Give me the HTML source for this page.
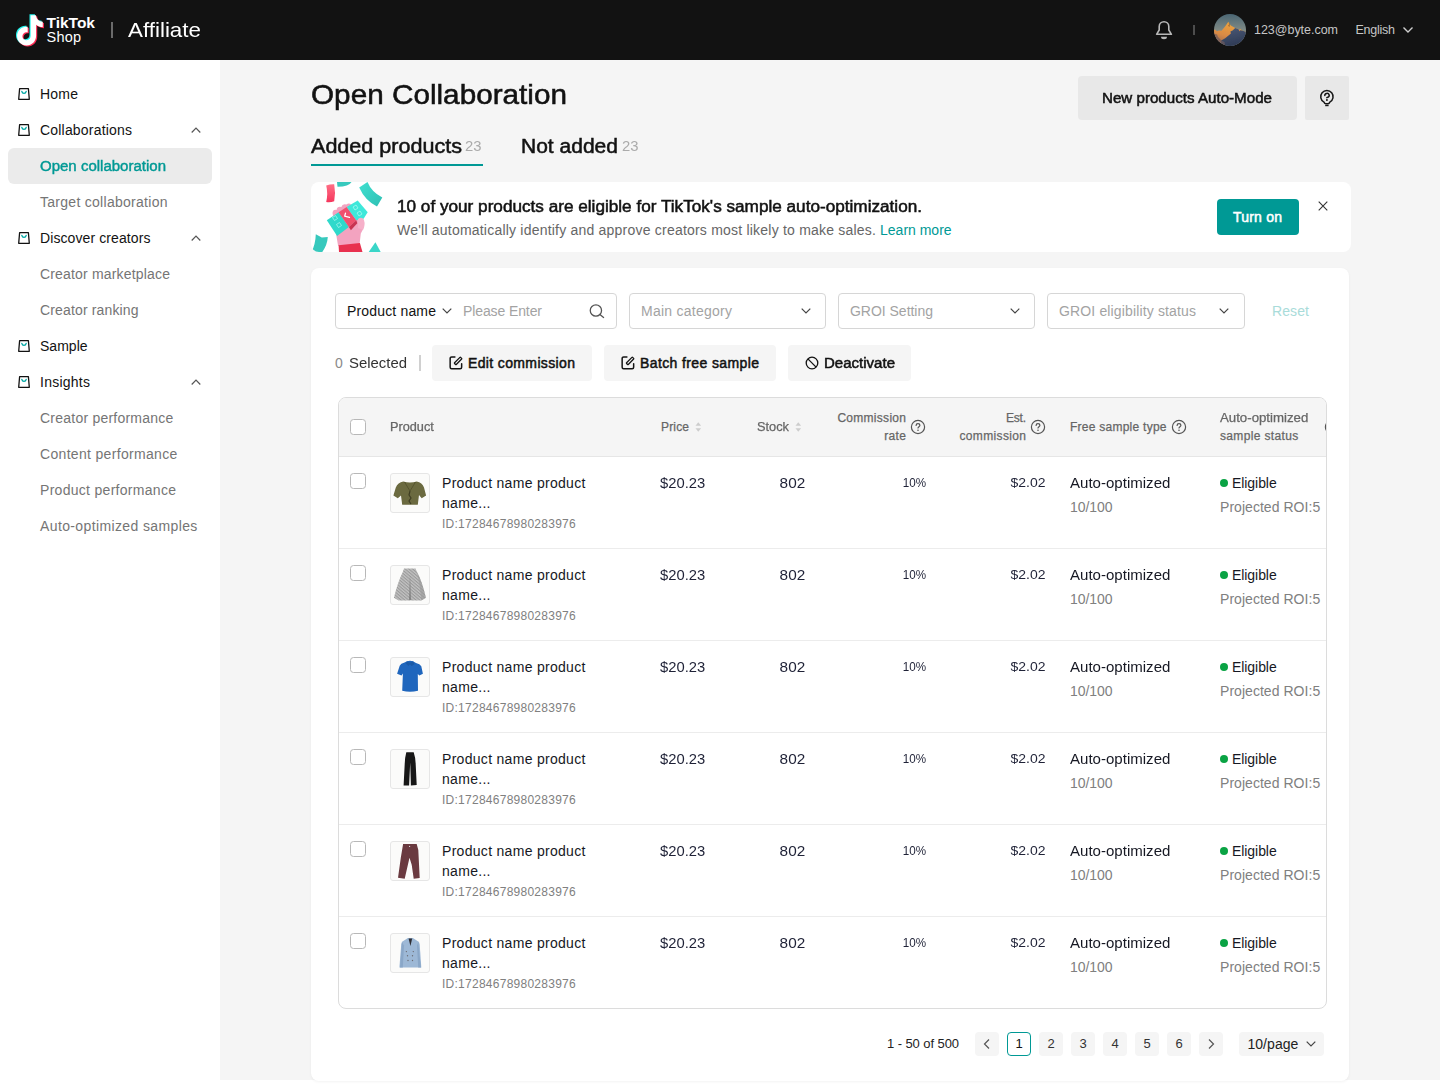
<!DOCTYPE html>
<html lang="en">
<head>
<meta charset="utf-8">
<title>Open Collaboration</title>
<style>
*{box-sizing:border-box;margin:0;padding:0}
html,body{width:1440px;height:1087px;overflow:hidden;background:#fff}
body{font-family:"Liberation Sans",sans-serif;color:#121212;font-size:14px;position:relative;-webkit-font-smoothing:antialiased}
.abs{position:absolute}
.t{position:absolute;white-space:nowrap;line-height:1}
/* header */
#hdr{position:absolute;left:0;top:0;width:1440px;height:60px;background:#121212}
/* sidebar */
#side{position:absolute;left:0;top:60px;width:220px;height:1027px;background:#fff}
#main{position:absolute;left:220px;top:60px;width:1220px;height:1020px;background:#f5f5f5}
.mi{position:absolute;left:0;width:220px;height:36px}
.mi .ic{position:absolute;left:18px;top:12px;width:12px;height:12px}
.mi .lb{position:absolute;left:40px;top:0;line-height:36px;font-size:14px;white-space:nowrap;color:#121212}
.mi.sub .lb{color:#757575}
.mi .ch{position:absolute;left:191px;top:15px;width:10px;height:6px}
.mi.sel::before{content:"";position:absolute;left:8px;top:0;width:204px;height:36px;border-radius:6px;background:#ebebeb}
.mi.sel .lb{color:#009995;-webkit-text-stroke:0.400px #009995}

.sb{font-weight:400;-webkit-text-stroke:0.500px currentColor}
#title{left:311px;top:80.600px;font-size:28px;font-weight:400;-webkit-text-stroke:0.550px #121212}
.btn{position:absolute;border-radius:4px;background:#e8e8e8}
.tab{font-size:20px;top:136px}
.cnt{font-size:14px;color:#ababab;top:139px}
#banner{position:absolute;left:311px;top:182px;width:1040px;height:70px;background:#fff;border-radius:8px;overflow:hidden}
#card{position:absolute;left:311px;top:268px;width:1038px;height:813px;background:#fff;border-radius:8px;box-shadow:0 1px 3px rgba(0,0,0,0.050)}
.fsel{position:absolute;top:293px;height:36px;border:1px solid #d6d6d6;border-radius:4px;background:#fff}
.ph{color:#a3a3a3;font-size:14px}
.abtn{position:absolute;top:345px;height:36px;border-radius:4px;background:#f5f5f5}

#tbl{position:absolute;left:338px;top:397px;width:989px;height:612px;border:1px solid #dcdcdc;border-radius:8px;overflow:hidden;background:#fff}
#th{position:absolute;left:0;top:0;width:100%;height:59px;background:#f5f5f5;border-bottom:1px solid #e6e6e6}
.h{position:absolute;white-space:nowrap;font-size:12px;line-height:18px;color:#666;-webkit-text-stroke:0.250px #666}
.cb{position:absolute;left:11px;width:16px;height:16px;border:1px solid #b8b8b8;border-radius:3.500px;background:#fff}
.row{position:absolute;left:0;width:100%;height:92px;border-bottom:1px solid #ececec}
.thumb{position:absolute;left:51px;top:16px;width:40px;height:40px;border:1px solid #e6e6e6;border-radius:3px;background:#fbfbfa;overflow:hidden}
.c{position:absolute;white-space:nowrap;font-size:14px;line-height:20px;color:#161823}
.g{color:#808080}
.hq{position:absolute;width:16px;height:16px}
.srt{position:absolute;width:7px;height:12px}
#pg .pb{position:absolute;top:1032px;width:24px;height:24px;border-radius:4px;background:#f5f5f5;font-size:13px;line-height:24.800px;text-align:center;color:#333;overflow:hidden}
#pg .pb svg{display:block}
.pr,.stk,.pct,.ec{color:#1f2237}
/*AUTOFIT*/
#tk1{letter-spacing:-0.006px}
#tk2{letter-spacing:0.208px}
#aff{transform:scaleX(1.0657);transform-origin:0 50%}
#eml{letter-spacing:-0.024px}
#eng{letter-spacing:-0.267px}
#title{transform:scaleX(1.0610);transform-origin:0 50%}
#npam{transform:scaleX(1.0814);transform-origin:0 50%}
#tab1{transform:scaleX(1.0777);transform-origin:0 50%}
#c1{transform:scaleX(1.0592);transform-origin:0 50%}
#tab2{transform:scaleX(1.0510);transform-origin:0 50%}
#c2{transform:scaleX(1.0592);transform-origin:0 50%}
#bt1{transform:scaleX(1.0725);transform-origin:0 50%}
#bt2s{letter-spacing:0.212px}
#lm{letter-spacing:-0.010px}
#ton{letter-spacing:0.211px}
#pn{letter-spacing:0.166px}
#pe{letter-spacing:-0.107px}
#mc{letter-spacing:0.255px}
#gs{letter-spacing:-0.024px}
#ge{letter-spacing:0.144px}
#rst{letter-spacing:0.105px}
#s1{transform:scaleX(1.0645);transform-origin:0 50%}
#b1{letter-spacing:0.363px}
#b2{letter-spacing:0.385px}
#b3{transform:scaleX(1.0732);transform-origin:0 50%}
#lb0{letter-spacing:0.214px}
#lb1{letter-spacing:0.192px}
#lb2{transform:scaleX(1.0721);transform-origin:0 50%}
#lb3{letter-spacing:0.280px}
#lb4{letter-spacing:0.099px}
#lb5{letter-spacing:0.176px}
#lb6{letter-spacing:0.143px}
#lb7{letter-spacing:0.026px}
#lb8{letter-spacing:0.250px}
#lb9{letter-spacing:0.229px}
#lb10{letter-spacing:0.320px}
#lb11{letter-spacing:0.293px}
#lb12{letter-spacing:0.376px}
#hp{transform:scaleX(1.0590);transform-origin:0 50%}
#hpr{letter-spacing:0.164px}
#hst{transform:scaleX(1.0661);transform-origin:0 50%}
.hcr1{letter-spacing:0.287px;margin-right:-0.287px}
.hcr2{letter-spacing:0.371px;margin-right:-0.371px}
.hec1{letter-spacing:-0.257px;margin-right:0.257px}
.hec2{letter-spacing:0.349px;margin-right:-0.349px}
#hfs{letter-spacing:0.252px}
.hao1{display:inline-block;transform:scaleX(1.1031);transform-origin:0 50%}
.hao2{letter-spacing:0.346px}
.pn1{letter-spacing:0.297px}
.pn2{letter-spacing:0.297px}
.pid{letter-spacing:0.258px}
.pr{transform:scaleX(1.0554);transform-origin:0 50%}
.stk{transform:scaleX(1.0577);transform-origin:100% 50%}
.pct{transform:scaleX(0.8951);transform-origin:100% 50%}
.ec{transform:scaleX(1.0754);transform-origin:100% 50%}
.ao{transform:scaleX(1.0751);transform-origin:0 50%}
.rt{letter-spacing:-0.066px}
.el{letter-spacing:-0.063px}
.roi{letter-spacing:0.042px}
#pgt{letter-spacing:-0.083px}
#ppg{letter-spacing:0.065px}
/*END*/
</style>
</head>
<body>
<div id="hdr">
<svg class="abs" style="left:15.500px;top:12px" width="33" height="37" viewBox="0 0 32 36">
<path d="M14.2 3.2h5.2c.3 3.6 2.6 6 6.6 6.4v5.1c-2.500-.1-4.700-.9-6.500-2.300v10.800c0 5.400-4.100 9.400-9.300 9.400-5.200 0-9.200-4-9.200-9.200 0-5.500 4.600-9.700 10.300-9v5.300c-2.800-.6-5.100 1.200-5.100 3.800 0 2.300 1.800 4 4 4 2.300 0 4-1.700 4-4.300z" fill="#25f4ee" transform="translate(-1.100,-1)"/>
<path d="M14.2 3.200h5.200c.3 3.600 2.600 6 6.600 6.400v5.100c-2.500-.1-4.700-.9-6.500-2.300v10.800c0 5.400-4.100 9.400-9.300 9.400-5.200 0-9.200-4-9.200-9.200 0-5.500 4.600-9.700 10.300-9v5.300c-2.800-.6-5.100 1.200-5.100 3.800 0 2.300 1.800 4 4 4 2.300 0 4-1.700 4-4.300z" fill="#fe2c55" transform="translate(1.100,1)"/>
<path d="M14.200 3.200h5.200c.3 3.600 2.600 6 6.600 6.400v5.100c-2.500-.1-4.700-.9-6.500-2.300v10.800c0 5.400-4.100 9.400-9.300 9.400-5.200 0-9.200-4-9.200-9.200 0-5.500 4.600-9.700 10.300-9v5.300c-2.800-.6-5.100 1.200-5.100 3.800 0 2.300 1.800 4 4 4 2.300 0 4-1.700 4-4.300z" fill="#fff"/>
</svg>
<div class="t" id="tk1" style="left:46.500px;top:14.500px;font-size:15.500px;font-weight:700;color:#fff">TikTok</div>
<div class="t" id="tk2" style="left:46.500px;top:30px;font-size:14.500px;color:#fff">Shop</div>
<div class="abs" style="left:111px;top:22px;width:1.500px;height:16px;background:#6b6b6b"></div>
<div class="t" id="aff" style="left:128px;top:19px;font-size:21px;color:#fff;font-weight:400">Affiliate</div>
<svg class="abs" style="left:1154px;top:19px" width="20" height="22" viewBox="0 0 20 22"><path d="M2.600 15.300l2.600-4.300v-3.500a4.800 4.800 0 0 1 9.600 0v3.500l2.600 4.300z" fill="none" stroke="#b8b8b8" stroke-width="1.600" stroke-linejoin="round"/><path d="M7 17.700h6a3 2.500 0 0 1-6 0z" fill="#b8b8b8"/></svg>
<div class="abs" style="left:1193px;top:24.600px;width:2px;height:10.600px;background:#4d4d4d"></div>
<svg class="abs" style="left:1214px;top:14px" width="32" height="32" viewBox="0 0 32 32"><defs><clipPath id="av"><circle cx="16" cy="16" r="16"/></clipPath><linearGradient id="sky" x1="0" y1="0" x2="0" y2="1"><stop offset="0" stop-color="#4a6674"/><stop offset="0.600" stop-color="#8a9188"/><stop offset="1" stop-color="#8a9188"/></linearGradient><linearGradient id="gld" x1="0.600" y1="0" x2="0.200" y2="1"><stop offset="0" stop-color="#f0a63c"/><stop offset="0.550" stop-color="#d98a45"/><stop offset="1" stop-color="#8a6250"/></linearGradient><linearGradient id="snw" x1="0" y1="0" x2="0.300" y2="1"><stop offset="0" stop-color="#4c5a76"/><stop offset="1" stop-color="#2e3a55"/></linearGradient><filter id="bl"><feGaussianBlur stdDeviation="0.450"/></filter></defs><g clip-path="url(#av)"><rect width="32" height="32" fill="url(#sky)"/><g filter="url(#bl)"><path d="M-1 17l2-1.500 2 1.800 2-0.800 2.500 0.300 2.500-3 2-2.600 2.300-3.500 2.500 3.800 4.400 2.600 2.600 0.900 1.300 1 1.200-1 1.600 1.600 2.400 0.700 2.700 1.700v14h-33z" fill="url(#gld)"/><path d="M21.200 14.100l2.600 0.900 1.300 1 2.800 0.600 2.400 0.700 2.700 1.700v14h-26l0.200-6.500 4-2.200 5.700-4.900 -0.500-1.800 2.200-1.200z" fill="url(#snw)"/><path d="M14.300 8.200l0.900 1.800-0.900 2 1.400 0.800-0.400-2.300 0.800-0.300z" fill="#7a5232"/><path d="M-1 19.500l4 1 1 2.500 3.500 3.500 3 1.500 1 5h-13z" fill="#6d5a5e" opacity="0.700"/><path d="M25 15.200l1.300 1.500-1.300 0.600z" fill="#d98a45"/></g></g></svg>
<div class="t" id="eml" style="left:1254px;top:24px;font-size:12.500px;color:#c6c6c6">123@byte.com</div>
<div class="t" id="eng" style="left:1355.500px;top:24px;font-size:12.500px;color:#c6c6c6">English</div>
<svg class="abs" style="left:1402px;top:26px" width="12" height="8" viewBox="0 0 12 8"><path d="M1.500 1.500l4.500 4.500 4.500-4.500" fill="none" stroke="#cfcfcf" stroke-width="1.400"/></svg>
</div>
<div id="side">
<div class="mi" style="top:16px"><svg class="ic" viewBox="0 0 12 12"><path d="M1.600 0.700h8.800l0.900 10.600h-10.600z" fill="none" stroke="#121212" stroke-width="1.300" stroke-linejoin="round"/><path d="M3.800 3.300c0.300 1.300 1.200 2 2.200 2s1.900-0.700 2.200-2" fill="none" stroke="#00a8a4" stroke-width="1.300" stroke-linecap="round"/></svg><span class="lb" id="lb0">Home</span></div>
<div class="mi" style="top:52px"><svg class="ic" viewBox="0 0 12 12"><path d="M1.600 0.700h8.800l0.900 10.600h-10.600z" fill="none" stroke="#121212" stroke-width="1.300" stroke-linejoin="round"/><path d="M3.800 3.300c0.300 1.300 1.200 2 2.200 2s1.900-0.700 2.200-2" fill="none" stroke="#00a8a4" stroke-width="1.300" stroke-linecap="round"/></svg><span class="lb" id="lb1">Collaborations</span><svg class="ch" viewBox="0 0 10 6"><path d="M0.700 5.500l4.300-4.300 4.300 4.300" fill="none" stroke="#555" stroke-width="1.200"/></svg></div>
<div class="mi sub sel" style="top:88px"><span class="lb" id="lb2">Open collaboration</span></div>
<div class="mi sub" style="top:124px"><span class="lb" id="lb3">Target collaboration</span></div>
<div class="mi" style="top:160px"><svg class="ic" viewBox="0 0 12 12"><path d="M1.600 0.700h8.800l0.900 10.600h-10.600z" fill="none" stroke="#121212" stroke-width="1.300" stroke-linejoin="round"/><path d="M3.800 3.300c0.300 1.300 1.200 2 2.200 2s1.900-0.700 2.200-2" fill="none" stroke="#00a8a4" stroke-width="1.300" stroke-linecap="round"/></svg><span class="lb" id="lb4">Discover creators</span><svg class="ch" viewBox="0 0 10 6"><path d="M0.700 5.500l4.300-4.300 4.300 4.300" fill="none" stroke="#555" stroke-width="1.200"/></svg></div>
<div class="mi sub" style="top:196px"><span class="lb" id="lb5">Creator marketplace</span></div>
<div class="mi sub" style="top:232px"><span class="lb" id="lb6">Creator ranking</span></div>
<div class="mi" style="top:268px"><svg class="ic" viewBox="0 0 12 12"><path d="M1.600 0.700h8.800l0.900 10.600h-10.600z" fill="none" stroke="#121212" stroke-width="1.300" stroke-linejoin="round"/><path d="M3.800 3.300c0.300 1.300 1.200 2 2.200 2s1.900-0.700 2.200-2" fill="none" stroke="#00a8a4" stroke-width="1.300" stroke-linecap="round"/></svg><span class="lb" id="lb7">Sample</span></div>
<div class="mi" style="top:304px"><svg class="ic" viewBox="0 0 12 12"><path d="M1.600 0.700h8.800l0.900 10.600h-10.600z" fill="none" stroke="#121212" stroke-width="1.300" stroke-linejoin="round"/><path d="M3.800 3.300c0.300 1.300 1.200 2 2.200 2s1.900-0.700 2.200-2" fill="none" stroke="#00a8a4" stroke-width="1.300" stroke-linecap="round"/></svg><span class="lb" id="lb8">Insights</span><svg class="ch" viewBox="0 0 10 6"><path d="M0.700 5.500l4.300-4.300 4.300 4.300" fill="none" stroke="#555" stroke-width="1.200"/></svg></div>
<div class="mi sub" style="top:340px"><span class="lb" id="lb9">Creator performance</span></div>
<div class="mi sub" style="top:376px"><span class="lb" id="lb10">Content performance</span></div>
<div class="mi sub" style="top:412px"><span class="lb" id="lb11">Product performance</span></div>
<div class="mi sub" style="top:448px"><span class="lb" id="lb12">Auto-optimized samples</span></div>
</div>
<div id="main"></div>
<div class="t" id="title">Open Collaboration</div>
<div class="btn" style="left:1078px;top:76px;width:219px;height:44px"></div>
<div class="t sb" id="npam" style="left:1102px;top:91px;font-size:14px">New products Auto-Mode</div>
<div class="btn" style="left:1305px;top:76px;width:44px;height:44px;border-radius:2px"></div>
<svg class="abs" style="left:1319px;top:89px" width="16" height="18" viewBox="0 0 16 18"><path d="M4.990 13.070a6.200 6.200 0 1 1 5.820 0l-0.800 1.300q-2.100 0.900-4.200 0z" fill="none" stroke="#161616" stroke-width="1.500" stroke-linejoin="round"/><path d="M6.200 16.500h3.400" stroke="#161616" stroke-width="1.400" stroke-linecap="butt"/><path d="M5.800 6.500a2.200 2 0 1 1 3.100 1.700l-1.100 0.450" fill="none" stroke="#161616" stroke-width="1.500" stroke-linecap="round"/><circle cx="7.900" cy="11" r="0.950" fill="#161616"/></svg>
<div class="t tab sb" id="tab1" style="left:311px">Added products</div>
<div class="t cnt" id="c1" style="left:465px">23</div>
<div class="abs" style="left:311px;top:164px;width:172px;height:2px;background:#009995"></div>
<div class="t tab sb" id="tab2" style="left:521px">Not added</div>
<div class="t cnt" id="c2" style="left:622px">23</div>
<div id="banner">
<svg class="abs" style="left:0;top:0" width="76" height="70" viewBox="0 0 76 70">
<defs><linearGradient id="tg" x1="0" y1="0" x2="1" y2="1"><stop offset="0" stop-color="#3fe0d0"/><stop offset="1" stop-color="#2fbfb3"/></linearGradient>
<linearGradient id="rg" x1="0" y1="0" x2="0" y2="1"><stop offset="0" stop-color="#ff6f86"/><stop offset="1" stop-color="#f5365c"/></linearGradient></defs>
<path d="M15.200 3.600q4-1.600 8-1.400q1.600 8.500 0 17q-4 1.600-8 0.800q2-8.500 0-16.400z" fill="url(#rg)"/>
<path d="M26 0h14.500q-2.500 4.500-14 4.800z" fill="#37c9bd"/>
<path d="M48.200 5.500l8.300-5.500q4 10 14.800 15.500l-5.300 9q-12-6-17.800-19z" fill="url(#tg)"/>
<path d="M4.800 52.200l6 3.300 6-0.500q-0.500 8-5.500 15h-10.800q4-8 4.300-17.800z" fill="#37c9bd"/>
<path d="M64.400 60.300l5.300 9.700h-12z" fill="#3ad6c8"/>
<path d="M21.500 31q0.500-4 4-3q0.800-4 4.800-3q1.200-3.800 5-2.500q3-2.200 5 0.500l11.500 12.500q3 8-2 16l-1.200 10.500-21.500 2-2-12z" fill="#f3a3c0"/>
<path d="M27.600 63.300l21.300-2.200 2.600 8.900h-23.500z" fill="#e8314f"/>
<path d="M15.800 38.300l11.800-8.100 10.300 14.700-11.800 9.200z" fill="#2fd9cb"/>
<path d="M27.600 30.200l8.100-5.200 9.600 13.300-7.400 6.600z" fill="#f0506e"/>
<path d="M35.700 25l11-6.600 10 11.800-4.100 6.600-7.300 1.500z" fill="#3ee8da"/>
<path d="M37.900 44.900l7.400-6.600 1 3-6.400 7z" fill="#c93352"/>
<g fill="none" stroke="#c9fff8" stroke-width="0.800" opacity="0.750"><path d="M21.500 35.500l3-2 2 3-3 2z"/><path d="M25.500 42.500l3-2 2 3-3 2z"/><path d="M42 25l3-2 2 3-3 2z"/><path d="M46 31l3-2 2 3-3 2z"/></g><path d="M34.500 31.200l-0.800 3 4.800 1.200" fill="none" stroke="#fff" stroke-width="1.300" stroke-linecap="round" stroke-linejoin="round"/>
<path d="M47 37q4-3 6 1q1.500 5-1 10l-5-2z" fill="#f6b0c9"/>
</svg>
<div class="t sb" id="bt1" style="left:86px;top:16.500px;font-size:16px;color:#121212">10 of your products are eligible for TikTok's sample auto-optimization.</div>
<div class="t" id="bt2" style="left:86px;top:41px;font-size:14px;color:#666"><span id="bt2s">We'll automatically identify and approve creators most likely to make sales.</span> <span style="color:#009995" id="lm">Learn more</span></div>
<div class="abs" style="left:906px;top:17px;width:82px;height:36px;border-radius:4px;background:#009995"></div>
<div class="t sb" id="ton" style="left:922px;top:28px;font-size:14px;color:#fff">Turn on</div>
<svg class="abs" style="left:1007px;top:19px" width="10" height="10" viewBox="0 0 10 10"><path d="M0.700 0.700l8.600 8.600M9.300 0.700l-8.600 8.600" stroke="#333" stroke-width="1.100"/></svg>
</div>
<div id="card"></div>
<div class="fsel" style="left:335px;width:282px"></div>
<div class="t" id="pn" style="left:347px;top:304px;font-size:14px">Product name</div>
<svg class="abs" style="left:442px;top:308px" width="10" height="6" viewBox="0 0 10 6"><path d="M0.700 0.700l4.300 4.300 4.300-4.300" fill="none" stroke="#444" stroke-width="1.200"/></svg>
<div class="t ph" id="pe" style="left:463px;top:304px">Please Enter</div>
<svg class="abs" style="left:588px;top:303px" width="18" height="18" viewBox="0 0 18 18"><circle cx="7.900" cy="7.450" r="5.650" fill="none" stroke="#555" stroke-width="1.300"/><path d="M11.900 11.450l3.700 3" stroke="#555" stroke-width="1.300" stroke-linecap="round"/></svg>
<div class="fsel" style="left:629px;width:197px"></div>
<div class="t ph" id="mc" style="left:641px;top:304px">Main category</div>
<svg class="abs" style="left:801px;top:308px" width="10" height="6" viewBox="0 0 10 6"><path d="M0.700 0.700l4.300 4.300 4.300-4.300" fill="none" stroke="#444" stroke-width="1.200"/></svg>
<div class="fsel" style="left:838px;width:197px"></div>
<div class="t ph" id="gs" style="left:850px;top:304px">GROI Setting</div>
<svg class="abs" style="left:1010px;top:308px" width="10" height="6" viewBox="0 0 10 6"><path d="M0.700 0.700l4.300 4.300 4.300-4.300" fill="none" stroke="#444" stroke-width="1.200"/></svg>
<div class="fsel" style="left:1047px;width:198px"></div>
<div class="t ph" id="ge" style="left:1059px;top:304px">GROI eligibility status</div>
<svg class="abs" style="left:1219px;top:308px" width="10" height="6" viewBox="0 0 10 6"><path d="M0.700 0.700l4.300 4.300 4.300-4.300" fill="none" stroke="#444" stroke-width="1.200"/></svg>
<div class="t" id="rst" style="left:1272px;top:304px;font-size:14px;color:#a9dcda">Reset</div>
<div class="t" id="s0" style="left:335px;top:356px;font-size:14px;color:#8a8a8a">0</div>
<div class="t" id="s1" style="left:349px;top:356px;font-size:14px;color:#333">Selected</div>
<div class="abs" style="left:419.300px;top:355px;width:1.500px;height:16px;background:#d0d0d0"></div>
<div class="abtn" style="left:432px;width:160px"></div>
<svg class="abs" style="left:449px;top:356px" width="14" height="14" viewBox="0 0 14 14"><path d="M5.900 0.950h-3.250a1.500 1.500 0 0 0-1.500 1.500v8.800a1.500 1.500 0 0 0 1.500 1.500h8.500a1.500 1.500 0 0 0 1.500-1.500v-3.400" fill="none" stroke="#161616" stroke-width="1.500" stroke-linecap="round"/><rect x="-4.300" y="-1.200" width="8.600" height="2.400" rx="0.500" transform="translate(9.100 4.900) rotate(-45)" fill="none" stroke="#161616" stroke-width="1.300"/></svg>
<div class="t sb" id="b1" style="left:468px;top:356px;font-size:14px">Edit commission</div>
<div class="abtn" style="left:604px;width:172px"></div>
<svg class="abs" style="left:621px;top:356px" width="14" height="14" viewBox="0 0 14 14"><path d="M5.900 0.950h-3.250a1.500 1.500 0 0 0-1.500 1.500v8.800a1.500 1.500 0 0 0 1.500 1.500h8.500a1.500 1.500 0 0 0 1.500-1.500v-3.400" fill="none" stroke="#161616" stroke-width="1.500" stroke-linecap="round"/><rect x="-4.300" y="-1.200" width="8.600" height="2.400" rx="0.500" transform="translate(9.100 4.900) rotate(-45)" fill="none" stroke="#161616" stroke-width="1.300"/></svg>
<div class="t sb" id="b2" style="left:640px;top:356px;font-size:14px">Batch free sample</div>
<div class="abtn" style="left:788px;width:123px"></div>
<svg class="abs" style="left:805px;top:356px" width="14" height="14" viewBox="0 0 14 14"><circle cx="7" cy="7" r="5.800" fill="none" stroke="#121212" stroke-width="1.300"/><path d="M2.900 2.900l8.200 8.200" stroke="#121212" stroke-width="1.300"/></svg>
<div class="t sb" id="b3" style="left:824px;top:356px;font-size:14px">Deactivate</div>
<div id="tbl">
<div id="th">
<div class="cb" style="top:21px"></div>
<div class="h" id="hp" style="left:51px;top:20px">Product</div>
<div class="h" id="hpr" style="left:322px;top:20px">Price</div><svg class="srt" style="left:356px;top:23px" viewBox="0 0 7 12"><path d="M3.300 1.200l2.800 3.500h-5.600z" fill="#cdcdcd"/><path d="M3.300 10.800l2.800-3.500h-5.600z" fill="#cdcdcd"/></svg>
<div class="h" id="hst" style="left:418px;top:20px">Stock</div><svg class="srt" style="left:456px;top:23px" viewBox="0 0 7 12"><path d="M3.300 1.200l2.800 3.500h-5.600z" fill="#cdcdcd"/><path d="M3.300 10.800l2.800-3.500h-5.600z" fill="#cdcdcd"/></svg>
<div class="h" id="hcr" style="right:420px;top:11px;text-align:right"><span class="hcr1">Commission</span><br><span class="hcr2">rate</span></div><svg class="hq" style="left:571px;top:21px" viewBox="0 0 16 16"><circle cx="8" cy="8" r="6.600" fill="none" stroke="#555" stroke-width="1.200"/><path d="M6.100 6.400c0-1.100 0.800-1.800 1.900-1.800s1.900 0.700 1.900 1.700c0 1.300-1.900 1.400-1.900 2.700" fill="none" stroke="#555" stroke-width="1.200" stroke-linecap="round"/><circle cx="8" cy="11.300" r="0.800" fill="#555"/></svg>
<div class="h" id="hec" style="right:300px;top:11px;text-align:right"><span class="hec1">Est.</span><br><span class="hec2">commission</span></div><svg class="hq" style="left:691px;top:21px" viewBox="0 0 16 16"><circle cx="8" cy="8" r="6.600" fill="none" stroke="#555" stroke-width="1.200"/><path d="M6.100 6.400c0-1.100 0.800-1.800 1.900-1.800s1.900 0.700 1.900 1.700c0 1.300-1.900 1.400-1.900 2.700" fill="none" stroke="#555" stroke-width="1.200" stroke-linecap="round"/><circle cx="8" cy="11.300" r="0.800" fill="#555"/></svg>
<div class="h" id="hfs" style="left:731px;top:20px">Free sample type</div><svg class="hq" style="left:832px;top:21px" viewBox="0 0 16 16"><circle cx="8" cy="8" r="6.600" fill="none" stroke="#555" stroke-width="1.200"/><path d="M6.100 6.400c0-1.100 0.800-1.800 1.900-1.800s1.900 0.700 1.900 1.700c0 1.300-1.900 1.400-1.900 2.700" fill="none" stroke="#555" stroke-width="1.200" stroke-linecap="round"/><circle cx="8" cy="11.300" r="0.800" fill="#555"/></svg>
<div class="h" id="hao" style="left:881px;top:11px"><span class="hao1">Auto-optimized</span><br><span class="hao2">sample status</span></div><svg class="hq" style="left:985px;top:21px" viewBox="0 0 16 16"><circle cx="8" cy="8" r="6.600" fill="none" stroke="#555" stroke-width="1.200"/><path d="M6.100 6.400c0-1.100 0.800-1.800 1.900-1.800s1.900 0.700 1.900 1.700c0 1.300-1.900 1.400-1.900 2.700" fill="none" stroke="#555" stroke-width="1.200" stroke-linecap="round"/><circle cx="8" cy="11.300" r="0.800" fill="#555"/></svg>
</div>
<div class="row" style="top:59px"><div class="cb" style="top:16px"></div><div class="thumb"><svg width="38" height="38" viewBox="1 1 38 38"><path d="M13.300 8.400q6.700 2 13.400 0q5.500 1 7.300 6l2.100 8-4.400 2.800-2.700-3.200-1.200 9.800h-15.600l-1.200-9.300-3.200 2.700-4.400-2.800 2.400-8q2-5 7.500-6z" fill="#6b6a40"/><path d="M14.500 9l5.500 9 5.500-9" fill="none" stroke="#55542f" stroke-width="1"/><path d="M20 18l-1 4 2 3-2 3 2 3" fill="none" stroke="#3f3e22" stroke-width="1.200"/></svg></div><div class="c pn" style="left:103px;top:16px"><span class="pn1">Product name product</span><br><span class="pn2">name...</span></div><div class="c g pid" style="left:103px;top:58.500px;font-size:12px;line-height:16px">ID:17284678980283976</div><div class="c pr" style="left:321px;top:16px">$20.23</div><div class="c stk" style="right:521px;top:16px;font-size:14.500px">802</div><div class="c pct" style="right:400px;top:16px;font-size:13px">10%</div><div class="c ec" style="right:280px;top:16px;font-size:13px">$2.02</div><div class="c ao" style="left:731px;top:16px">Auto-optimized</div><div class="c g rt" style="left:731px;top:40px">10/100</div><div class="abs" style="left:881px;top:22px;width:8px;height:8px;border-radius:50%;background:#0aa344"></div><div class="c el" style="left:893px;top:16px">Eligible</div><div class="c g roi" style="left:881px;top:40px">Projected ROI:5</div></div>
<div class="row" style="top:151px"><div class="cb" style="top:16px"></div><div class="thumb"><svg width="38" height="38" viewBox="1 1 38 38"><defs><pattern id="st" width="2.400" height="2.400" patternUnits="userSpaceOnUse" patternTransform="rotate(40)"><rect width="2.400" height="2.400" fill="#c2c2c2"/><rect width="2.400" height="1.100" fill="#9a9a9a"/></pattern></defs><path d="M14 3.500h11.500l1.500 3.500q5 9 8.900 25.700l-4.600 2.800h-22.600l-4.800-2.800q4-16 8.900-25.700z" fill="url(#st)"/><path d="M20 9l0.800 26h-1.600z" fill="#7a7a7a"/><path d="M27 7q5 9 8.900 25.700l-4.600 2.800q-1-15-4.300-28.500z" fill="#999" opacity="0.600"/></svg></div><div class="c pn" style="left:103px;top:16px"><span class="pn1">Product name product</span><br><span class="pn2">name...</span></div><div class="c g pid" style="left:103px;top:58.500px;font-size:12px;line-height:16px">ID:17284678980283976</div><div class="c pr" style="left:321px;top:16px">$20.23</div><div class="c stk" style="right:521px;top:16px;font-size:14.500px">802</div><div class="c pct" style="right:400px;top:16px;font-size:13px">10%</div><div class="c ec" style="right:280px;top:16px;font-size:13px">$2.02</div><div class="c ao" style="left:731px;top:16px">Auto-optimized</div><div class="c g rt" style="left:731px;top:40px">10/100</div><div class="abs" style="left:881px;top:22px;width:8px;height:8px;border-radius:50%;background:#0aa344"></div><div class="c el" style="left:893px;top:16px">Eligible</div><div class="c g roi" style="left:881px;top:40px">Projected ROI:5</div></div>
<div class="row" style="top:243px"><div class="cb" style="top:16px"></div><div class="thumb"><svg width="38" height="38" viewBox="1 1 38 38"><path d="M17 4.200q3-1 6 0l3 1.800q4 1 5.300 3.200l1.600 7.500-3.500 1.900-1.600-1.600 0.200 16.700q-8 2.200-15.800 0l0.700-17.100-1.400 2-4.400-1.900 2.600-8q1.300-2.200 4.300-2.900z" fill="#1f66bd"/><path d="M17 4.200q3 2.500 6 0l1.500 2.800-2.800 2-1.700-1.800-1.500 1.800-2.700-2.600z" fill="#1a59a6"/></svg></div><div class="c pn" style="left:103px;top:16px"><span class="pn1">Product name product</span><br><span class="pn2">name...</span></div><div class="c g pid" style="left:103px;top:58.500px;font-size:12px;line-height:16px">ID:17284678980283976</div><div class="c pr" style="left:321px;top:16px">$20.23</div><div class="c stk" style="right:521px;top:16px;font-size:14.500px">802</div><div class="c pct" style="right:400px;top:16px;font-size:13px">10%</div><div class="c ec" style="right:280px;top:16px;font-size:13px">$2.02</div><div class="c ao" style="left:731px;top:16px">Auto-optimized</div><div class="c g rt" style="left:731px;top:40px">10/100</div><div class="abs" style="left:881px;top:22px;width:8px;height:8px;border-radius:50%;background:#0aa344"></div><div class="c el" style="left:893px;top:16px">Eligible</div><div class="c g roi" style="left:881px;top:40px">Projected ROI:5</div></div>
<div class="row" style="top:335px"><div class="cb" style="top:16px"></div><div class="thumb"><svg width="38" height="38" viewBox="1 1 38 38"><path d="M16.300 3.300h7.400q2 6 2 12l1 20.800-5.800 0.500-0.700-23.200-1.100 23.200h-5.500l1.100-21.600q0.300-7 1.600-11.700z" fill="#171717"/></svg></div><div class="c pn" style="left:103px;top:16px"><span class="pn1">Product name product</span><br><span class="pn2">name...</span></div><div class="c g pid" style="left:103px;top:58.500px;font-size:12px;line-height:16px">ID:17284678980283976</div><div class="c pr" style="left:321px;top:16px">$20.23</div><div class="c stk" style="right:521px;top:16px;font-size:14.500px">802</div><div class="c pct" style="right:400px;top:16px;font-size:13px">10%</div><div class="c ec" style="right:280px;top:16px;font-size:13px">$2.02</div><div class="c ao" style="left:731px;top:16px">Auto-optimized</div><div class="c g rt" style="left:731px;top:40px">10/100</div><div class="abs" style="left:881px;top:22px;width:8px;height:8px;border-radius:50%;background:#0aa344"></div><div class="c el" style="left:893px;top:16px">Eligible</div><div class="c g roi" style="left:881px;top:40px">Projected ROI:5</div></div>
<div class="row" style="top:427px"><div class="cb" style="top:16px"></div><div class="thumb"><svg width="38" height="38" viewBox="1 1 38 38"><path d="M13.100 3.100h13.600l1.600 6 1.400 28-6 0.700-2-14-2.200-7.100-4.800 21.100-6.700-1.100 2.800-20z" fill="#6a3a40"/><circle cx="19.600" cy="5.400" r="0.600" fill="#ddd"/></svg></div><div class="c pn" style="left:103px;top:16px"><span class="pn1">Product name product</span><br><span class="pn2">name...</span></div><div class="c g pid" style="left:103px;top:58.500px;font-size:12px;line-height:16px">ID:17284678980283976</div><div class="c pr" style="left:321px;top:16px">$20.23</div><div class="c stk" style="right:521px;top:16px;font-size:14.500px">802</div><div class="c pct" style="right:400px;top:16px;font-size:13px">10%</div><div class="c ec" style="right:280px;top:16px;font-size:13px">$2.02</div><div class="c ao" style="left:731px;top:16px">Auto-optimized</div><div class="c g rt" style="left:731px;top:40px">10/100</div><div class="abs" style="left:881px;top:22px;width:8px;height:8px;border-radius:50%;background:#0aa344"></div><div class="c el" style="left:893px;top:16px">Eligible</div><div class="c g roi" style="left:881px;top:40px">Projected ROI:5</div></div>
<div class="row" style="top:519px"><div class="cb" style="top:16px"></div><div class="thumb"><svg width="38" height="38" viewBox="1 1 38 38"><path d="M17.900 4.900h4.900l5.500 3.600q1.200 1 1.400 3l1.600 23.100h-21.900l1.800-23q0.200-2 1.300-3.100z" fill="#9db8d6"/><path d="M18.600 5.500h3.600l-1.800 7.500z" fill="#2d2d33"/><path d="M12 9q-1 12-2 25.600h2.800l1.200-22z" fill="#8aa7c8"/><path d="M28.300 9q1 12 2.700 25.600h-2.800l-1.200-22z" fill="#8aa7c8"/><g fill="#6b6b73"><circle cx="16.400" cy="18.600" r="0.700"/><circle cx="23.300" cy="18.600" r="0.700"/><circle cx="17.500" cy="22.700" r="0.700"/><circle cx="22.500" cy="22.700" r="0.700"/><circle cx="18" cy="27.500" r="0.700"/><circle cx="22.500" cy="27.500" r="0.700"/></g></svg></div><div class="c pn" style="left:103px;top:16px"><span class="pn1">Product name product</span><br><span class="pn2">name...</span></div><div class="c g pid" style="left:103px;top:58.500px;font-size:12px;line-height:16px">ID:17284678980283976</div><div class="c pr" style="left:321px;top:16px">$20.23</div><div class="c stk" style="right:521px;top:16px;font-size:14.500px">802</div><div class="c pct" style="right:400px;top:16px;font-size:13px">10%</div><div class="c ec" style="right:280px;top:16px;font-size:13px">$2.02</div><div class="c ao" style="left:731px;top:16px">Auto-optimized</div><div class="c g rt" style="left:731px;top:40px">10/100</div><div class="abs" style="left:881px;top:22px;width:8px;height:8px;border-radius:50%;background:#0aa344"></div><div class="c el" style="left:893px;top:16px">Eligible</div><div class="c g roi" style="left:881px;top:40px">Projected ROI:5</div></div>
</div>
<div id="pg">
<div class="t" id="pgt" style="left:887px;top:1037px;font-size:13px;color:#222">1 - 50 of 500</div>
<div class="pb" style="left:975px"><svg width="24" height="24" viewBox="0 0 24 24"><path d="M14 7.500l-4.500 4.500 4.500 4.500" fill="none" stroke="#555" stroke-width="1.200"/></svg></div>
<div class="pb" style="left:1007px;background:#fff;border:1px solid #009995;line-height:22.800px;color:#121212">1</div>
<div class="pb" style="left:1039px">2</div>
<div class="pb" style="left:1071px">3</div>
<div class="pb" style="left:1103px">4</div>
<div class="pb" style="left:1135px">5</div>
<div class="pb" style="left:1167px">6</div>
<div class="pb" style="left:1199px"><svg width="24" height="24" viewBox="0 0 24 24"><path d="M10 7.500l4.500 4.500-4.500 4.500" fill="none" stroke="#555" stroke-width="1.200"/></svg></div>
<div class="pb" style="left:1239px;width:85px"></div>
<div class="t" id="ppg" style="left:1247.400px;top:1037px;font-size:14px;color:#222">10/page</div>
<svg class="abs" style="left:1306.200px;top:1041.300px" width="10" height="6" viewBox="0 0 10 6"><path d="M0.700 0.700l4.300 4.300 4.300-4.300" fill="none" stroke="#444" stroke-width="1.200"/></svg>
</div>
</body>
</html>
